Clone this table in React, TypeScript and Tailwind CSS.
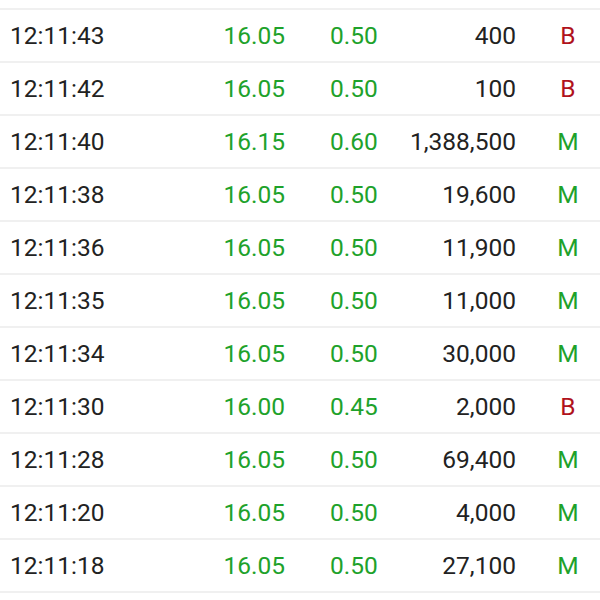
import React from 'react';

type Trade = {
  time: string;
  price: string;
  change: string;
  volume: string;
  side: 'B' | 'M';
};

const trades: Trade[] = [
  { time: '12:11:43', price: '16.05', change: '0.50', volume: '400', side: 'B' },
  { time: '12:11:42', price: '16.05', change: '0.50', volume: '100', side: 'B' },
  { time: '12:11:40', price: '16.15', change: '0.60', volume: '1,388,500', side: 'M' },
  { time: '12:11:38', price: '16.05', change: '0.50', volume: '19,600', side: 'M' },
  { time: '12:11:36', price: '16.05', change: '0.50', volume: '11,900', side: 'M' },
  { time: '12:11:35', price: '16.05', change: '0.50', volume: '11,000', side: 'M' },
  { time: '12:11:34', price: '16.05', change: '0.50', volume: '30,000', side: 'M' },
  { time: '12:11:30', price: '16.00', change: '0.45', volume: '2,000', side: 'B' },
  { time: '12:11:28', price: '16.05', change: '0.50', volume: '69,400', side: 'M' },
  { time: '12:11:20', price: '16.05', change: '0.50', volume: '4,000', side: 'M' },
  { time: '12:11:18', price: '16.05', change: '0.50', volume: '27,100', side: 'M' },
];

const App: React.FC = () => {
  return (
    <div className="w-[600px] h-[600px] overflow-hidden bg-white font-['Roboto','Liberation_Sans',sans-serif] text-[24.5px]">
      {/* tail of the previous row */}
      <div className="h-[10px] border-b-2 border-[#f0f0f0]" />
      {trades.map((t) => (
        <div key={t.time} className="flex items-center h-[53px] pl-[10px] pt-[2px] border-b-2 border-[#f0f0f0]">
          <span className="w-[200px] text-[#222222]">{t.time}</span>
          <span className="w-[75px] text-right text-[#1ea22b]">{t.price}</span>
          <span className="w-[60px] ml-[45px] text-[#1ea22b]">{t.change}</span>
          <span className="w-[126px] text-right text-[#222222]">{t.volume}</span>
          <span
            className={`w-[52px] ml-[26px] text-center ${
              t.side === 'B' ? 'text-[#b0121c]' : 'text-[#1ea22b]'
            }`}
          >
            {t.side}
          </span>
        </div>
      ))}
    </div>
  );
};

export default App;
